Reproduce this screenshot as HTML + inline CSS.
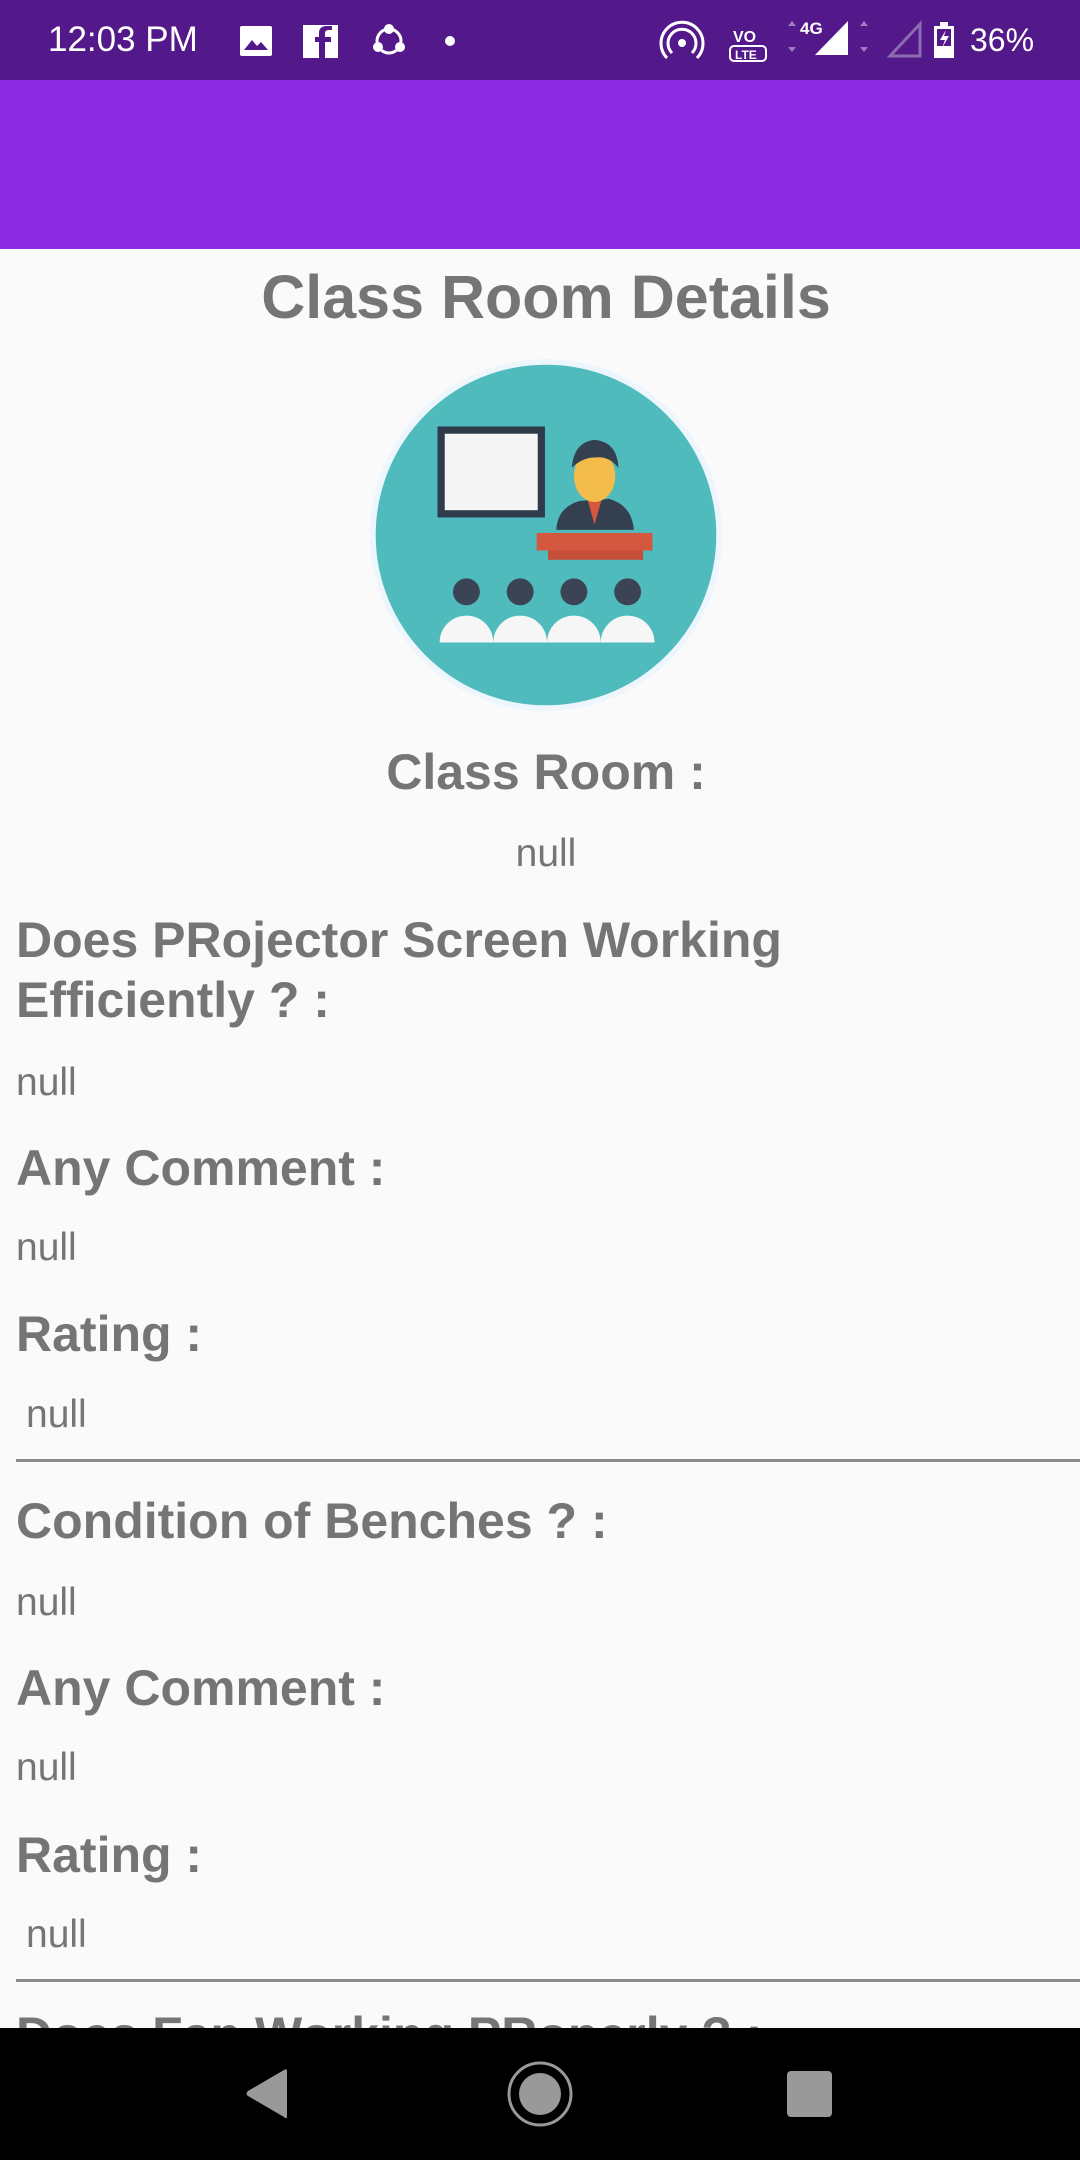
<!DOCTYPE html>
<html><head><meta charset="utf-8"><style>
*{margin:0;padding:0;box-sizing:border-box}
body{width:1080px;height:2160px;background:#fafafa;position:relative;overflow:hidden;font-family:"Liberation Sans",Roboto,sans-serif;color:#757575}
.t{position:absolute;white-space:nowrap;line-height:60px}
.b{font-weight:bold;font-size:50px;margin-top:0px}
.n{font-size:39px}
.hr{position:absolute;left:16px;right:0;height:3px;background:#8a8a8a}
</style></head><body>
<div style="position:absolute;left:0;top:0;width:1080px;height:80px;background:#53198a"></div>
<div style="position:absolute;left:0;top:80px;width:1080px;height:169px;background:#8a2be2"></div>
<div class="t" style="left:48px;top:12px;color:#fff;font-size:35px;line-height:56px">12:03 PM</div>
<svg style="position:absolute;left:0;top:0" width="1080" height="80">
<rect x="240" y="26" width="32" height="30" rx="2" fill="#fff"/><path d="M244 50 L252 40 L257 46 L261 42 L268 50Z" fill="#53198a"/>
<rect x="303" y="25" width="35" height="33" fill="#fff"/><path d="M325 58 V42 H331 V37 H325 V33 Q325 30 329 30 H332 V26 H327 Q319 26 319 33 V37 H315 V42 H319 V58Z" fill="#53198a"/>
<circle cx="389" cy="29" r="5" fill="#fff"/><circle cx="378" cy="47" r="5" fill="#fff"/><circle cx="400" cy="47" r="5" fill="#fff"/><circle cx="389" cy="41" r="12" fill="none" stroke="#fff" stroke-width="3"/>
<circle cx="450" cy="41" r="5" fill="#fff"/>
<circle cx="682" cy="43" r="4" fill="#fff"/><path d="M672 53 A14 14 0 1 1 692 53 M667 58 A21 21 0 1 1 697 58" fill="none" stroke="#fff" stroke-width="3"/>
<text x="733" y="42" fill="#fff" font-size="16" font-weight="bold" font-family="Liberation Sans">VO</text><rect x="730" y="46" width="36" height="15" rx="4" fill="none" stroke="#fff" stroke-width="2"/><text x="735" y="59" fill="#fff" font-size="12" font-weight="bold" font-family="Liberation Sans">LTE</text>
<path d="M788 26 l4 -5 l4 5Z M788 47 l4 5 l4 -5Z M860 26 l4 -5 l4 5Z M860 47 l4 5 l4 -5Z" fill="#9b7cc0"/>
<text x="800" y="34" fill="#fff" font-size="17" font-weight="bold" font-family="Liberation Sans">4G</text>
<path d="M815 55 L848 21 V55Z" fill="#fff"/>
<path d="M890 56 L920 24 V56Z" fill="none" stroke="#8a6cb0" stroke-width="3"/>
<rect x="934" y="26" width="20" height="32" fill="#fff"/><rect x="940" y="22" width="8" height="5" fill="#fff"/><rect x="937" y="29" width="14" height="17" fill="#53198a"/><path d="M946 30 L940 40 H945 L942 48 L949 36 H944Z" fill="#fff"/>
</svg>
<div class="t" style="left:970px;top:12px;color:#fff;font-size:32px;line-height:56px">36%</div>

<div class="t" style="left:0;width:1092px;text-align:center;top:262px;font-size:61px;font-weight:bold;line-height:70px">Class Room Details</div>

<svg style="position:absolute;left:369px;top:358px" width="354" height="354" viewBox="0 0 370 370">
<circle cx="185" cy="185" r="184" fill="#eef6fd"/>
<circle cx="185" cy="185" r="178" fill="#4fbbbd"/>
<g transform="translate(185 185) scale(1.08) translate(-185 -185)">
<rect x="80" y="80" width="104" height="88" fill="#2f3a4a"/>
<rect x="87" y="87" width="90" height="74" fill="#f5f5f5"/>
<path d="M195 180 Q196 158 218 152 L246 150 Q268 156 270 180Z" fill="#34404f"/>
<path d="M225 150 L232 175 L239 150Z" fill="#d4573f"/>
<ellipse cx="232" cy="128" rx="20" ry="25" fill="#f4bc4b"/>
<path d="M210 120 Q212 95 232 93 Q254 95 255 120 Q246 108 232 110 Q220 110 210 120Z" fill="#34404f"/>
<rect x="176" y="183" width="112" height="17" fill="#d4573f"/><rect x="187" y="200" width="92" height="9" fill="#c54e38"/>
<g fill="#3a4454"><circle cx="108" cy="240" r="13"/><circle cx="160" cy="240" r="13"/><circle cx="212" cy="240" r="13"/><circle cx="264" cy="240" r="13"/></g>
<g fill="#f6f6f6"><path d="M82 289 A26 26 0 0 1 134 289Z"/><path d="M134 289 A26 26 0 0 1 186 289Z"/><path d="M186 289 A26 26 0 0 1 238 289Z"/><path d="M238 289 A26 26 0 0 1 290 289Z"/></g>
</g>
</svg>

<div class="t b" style="left:0;width:1092px;text-align:center;top:742px">Class Room :</div>
<div class="t n" style="left:0;width:1092px;text-align:center;top:824px">null</div>
<div class="t b" style="left:16px;top:910px">Does PRojector Screen Working</div>
<div class="t b" style="left:16px;top:970px">Efficiently ? :</div>
<div class="t n" style="left:16px;top:1053px">null</div>
<div class="t b" style="left:16px;top:1138px">Any Comment :</div>
<div class="t n" style="left:16px;top:1218px">null</div>
<div class="t b" style="left:16px;top:1304px">Rating :</div>
<div class="t n" style="left:26px;top:1385px">null</div>
<div class="hr" style="top:1459px"></div>
<div class="t b" style="left:16px;top:1491px">Condition of Benches ? :</div>
<div class="t n" style="left:16px;top:1573px">null</div>
<div class="t b" style="left:16px;top:1658px">Any Comment :</div>
<div class="t n" style="left:16px;top:1738px">null</div>
<div class="t b" style="left:16px;top:1825px">Rating :</div>
<div class="t n" style="left:26px;top:1905px">null</div>
<div class="hr" style="top:1979px"></div>
<div class="t b" style="left:16px;top:2005px">Does Fan Working PRoperly ? :</div>

<div style="position:absolute;left:0;top:2028px;width:1080px;height:132px;background:#000"></div>
<svg style="position:absolute;left:0;top:2028px" width="1080" height="132">
<path d="M287 43 V88 Q287 92 284 89 L248 68 Q245 66 248 63 L284 42 Q287 40 287 43Z" fill="#999"/>
<circle cx="540" cy="66" r="31" fill="none" stroke="#999" stroke-width="3"/>
<circle cx="540" cy="66" r="21" fill="#999"/>
<rect x="787" y="43" width="45" height="46" rx="4" fill="#999"/>
</svg>
</body></html>
